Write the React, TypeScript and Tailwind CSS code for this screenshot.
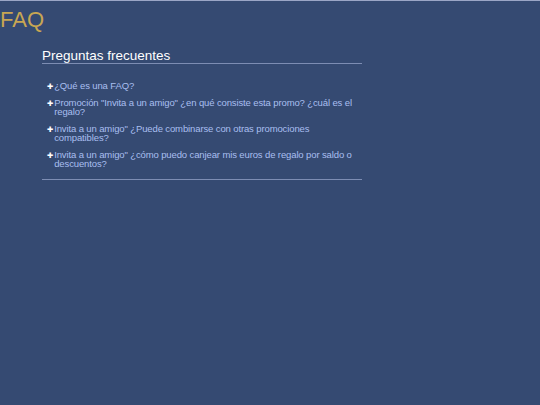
import React from 'react';

const preguntas: string[] = [
  '¿Qué es una FAQ?',
  'Promoción "Invita a un amigo" ¿en qué consiste esta promo? ¿cuál es el regalo?',
  'Invita a un amigo" ¿Puede combinarse con otras promociones compatibles?',
  'Invita a un amigo" ¿cómo puedo canjear mis euros de regalo por saldo o descuentos?',
];

export default function App() {
  return (
    <div
      className="min-h-[405px] w-full bg-[#354a72] border-t border-[#9ba6c6]"
      style={{ fontFamily: '"Liberation Sans", Arial, sans-serif' }}
    >
      <h1 className="pt-[6px] text-[22px] leading-[26px] text-[#c8a653]">FAQ</h1>

      <div className="ml-[42px] mt-[16px] w-[320px]">
        <h2 className="border-b border-[#7d8db3] text-[13.5px] leading-[14px] text-white">
          Preguntas frecuentes
        </h2>

        <ul className="flex flex-col gap-[8px] border-b border-[#7d8db3] pb-[11px] pl-[5px] pt-[17px]">
          {preguntas.map((q) => (
            <li
              key={q}
              className="flex items-baseline text-[9.5px] leading-[9px] tracking-[-0.12px] text-[#a9bff0]"
            >
              <span
                className="mr-[1px] text-[7.5px] leading-[7px] text-white"
                style={{ fontFamily: '"DejaVu Sans", sans-serif' }}
              >
                ✚
              </span>
              <span>{q}</span>
            </li>
          ))}
        </ul>
      </div>
    </div>
  );
}
